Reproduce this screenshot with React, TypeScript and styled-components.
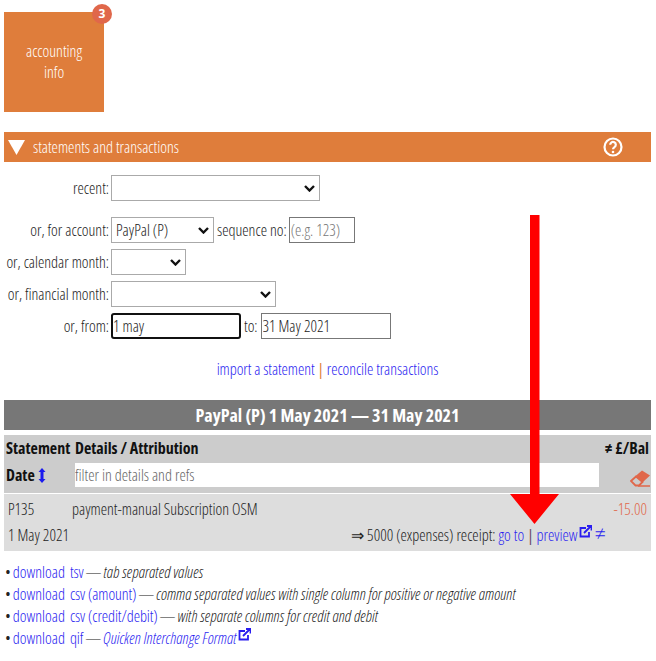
import React from "react";
import styled, { createGlobalStyle } from "styled-components";

const Global = createGlobalStyle`
  html, body { margin: 0; padding: 0; background: #fff; }
  body { font-family: "Open Sans", "Liberation Sans", sans-serif; font-stretch: 75%; font-weight: 300; font-size: 16px; color: #222; }
  * { box-sizing: border-box; }
  a { color: #2a1df0; text-decoration: none; }
`;

const Page = styled.div`
  position: relative;
  width: 656px;
  height: 661px;
  padding: 12px 5px 0 4px;
  overflow: hidden;
`;

const TileWrap = styled.div`
  position: relative;
  width: 100px;
  height: 100px;
`;

const Tile = styled.div`
  width: 100px;
  height: 100px;
  background: #df7d3b;
  color: #fff;
  display: flex;
  align-items: center;
  justify-content: center;
  text-align: center;
  line-height: 21px;
`;

const Badge = styled.span`
  position: absolute;
  top: -8px;
  right: -8px;
  width: 20px;
  height: 20px;
  border-radius: 50%;
  background: #e0674a;
  color: #fff;
  font-size: 12px;
  font-weight: 700;
  font-stretch: 100%;
  line-height: 20px;
  text-align: center;
`;

const SectionBar = styled.div`
  margin-top: 20px;
  height: 30px;
  background: #df7d3b;
  color: #fff;
  display: flex;
  align-items: center;
  padding: 0 28px 0 4px;
`;

const SectionTitle = styled.span`
  flex: 1;
  margin-left: 8px;
`;

const Form = styled.div`
  margin-top: 13px;
  display: flex;
  flex-direction: column;
  gap: 6px;
`;

const Row = styled.div<{ $gapAfter?: boolean }>`
  display: flex;
  align-items: center;
  height: 26px;
  margin-bottom: ${(p) => (p.$gapAfter ? "10px" : "0")};
`;

const Label = styled.label`
  width: 105px;
  margin-right: 2px;
  text-align: right;
  white-space: nowrap;
`;

const Select = styled.select<{ $w: number }>`
  width: ${(p) => p.$w}px;
  height: 26px;
  appearance: none;
  background: #fff;
  border: 1px solid #aaa;
  border-radius: 0;
  font: inherit;
  font-stretch: 75%;
  color: #222;
  padding: 0 4px;
`;

const SelectWrap = styled.span`
  position: relative;
  display: inline-flex;
`;

const Chevron = styled.svg`
  position: absolute;
  right: 5px;
  top: 10px;
  width: 11px;
  height: 7px;
  pointer-events: none;
`;

const Inline = styled.span<{ $right?: number }>`
  margin: 0 ${(p) => p.$right ?? 3}px 0 3px;
`;

const TextInput = styled.input<{ $w: number; $focus?: boolean }>`
  width: ${(p) => p.$w}px;
  height: 26px;
  border: ${(p) => (p.$focus ? "2px solid #111" : "1px solid #777")};
  border-radius: ${(p) => (p.$focus ? "3px" : "0")};
  font: inherit;
  font-stretch: 75%;
  color: #222;
  padding: 0 ${(p) => (p.$focus ? "0" : "1px")};
  background: #fff;
  outline: none;
  &::placeholder { color: #777; }
`;

const Links = styled.div`
  margin-top: 19px;
  text-align: center;
  line-height: 22px;
  letter-spacing: -0.06px;
`;

const Sep = styled.span<{ $dark?: boolean }>`
  color: ${(p) => (p.$dark ? "#6b4a6b" : "#df7d3b")};
  font-weight: 400;
`;

const TitleBand = styled.div`
  margin-top: 20px;
  height: 30px;
  background: #777;
  color: #fff;
  font-weight: 700;
  font-size: 18px;
  line-height: 30px;
  text-align: center;
`;

const HeadBlock = styled.div`
  margin-top: 5px;
  height: 58px;
  background: #ccc;
  font-weight: 700;
  color: #111;
`;

const HeadTop = styled.div`
  display: flex;
  height: 27px;
  align-items: center;
  padding: 0 2px 2px;
`;

const StatementHead = styled.span`
  width: 69px;
`;

const HeadBal = styled.span`
  margin-left: auto;
`;

const HeadBottom = styled.div`
  display: flex;
  align-items: center;
  height: 26px;
  padding-left: 2px;
`;

const DateHead = styled.span`
  width: 69px;
  display: flex;
  align-items: center;
  gap: 3px;
`;

const Filter = styled.input`
  width: 524px;
  height: 24px;
  border: 0;
  font: inherit;
  font-weight: 300;
  font-stretch: 75%;
  padding: 0;
  background: #fff;
  &::placeholder { color: #666; }
`;

const DataRow = styled.div`
  margin-top: 1px;
  height: 57px;
  background: #ddd;
  padding: 2px 4px 0 4px;
`;

const DataLine = styled.div`
  display: flex;
  height: 26px;
  align-items: center;
`;

const Ref = styled.span`
  width: 64px;
`;

const Amount = styled.span`
  margin-left: auto;
  color: #e0674a;
`;

const Account = styled.span`
  margin-left: auto;
  margin-right: 41px;
  white-space: pre;
`;

const NotEqual = styled.a`
  font-size: 20px;
  line-height: 16px;
  font-stretch: 100%;
`;

const Eraser = styled.svg`
  margin-left: auto;
  margin-right: 1px;
  margin-top: 6px;
  width: 20px;
  height: 17px;
  flex: none;
`;

const List = styled.ul`
  list-style: none;
  margin: 10px 0 0;
  padding: 0 0 0 1px;
  line-height: 22px;
  white-space: nowrap;
  word-spacing: -1px;
`;

const DownloadWord = styled.span`
  margin-right: 5px;
`;

const FileKind = styled.span`
  letter-spacing: -0.1px;
  word-spacing: 0;
`;

const Note = styled.em`
  font-style: italic;
  word-spacing: 0;
  letter-spacing: 0.03px;
`;

const Ext = styled.svg`
  width: 13px;
  height: 13px;
  vertical-align: 3px;
  margin-left: 1px;
`;

const Arrow = styled.svg`
  position: absolute;
  left: 510px;
  top: 215px;
  width: 49px;
  height: 309px;
`;

const Help = styled.svg`
  width: 20px;
  height: 20px;
`;

const ExtIcon = () => (
  <Ext viewBox="0 0 13 13" fill="none" stroke="#2a1df0" strokeWidth="1.8">
    <path d="M7 3H1.500v8.500H10V7" />
    <path d="M5 8l6.500-6.500M8 1h4.500v4.500" />
  </Ext>
);

const Sel = ({ w, value }: { w: number; value?: string }) => (
  <SelectWrap>
    <Select $w={w} defaultValue={value ?? ""}>
      <option value={value ?? ""}>{value ?? ""}</option>
    </Select>
    <Chevron viewBox="0 0 11 7" fill="none" stroke="#111" strokeWidth="2.4">
      <path d="M1 1l4.500 4.500L10 1" />
    </Chevron>
  </SelectWrap>
);

const Download = ({ kind }: { kind: string }) => (
  <a href="#"><DownloadWord>download</DownloadWord><FileKind>{kind}</FileKind></a>
);

export default function App() {
  return (
    <Page>
      <Global />
      <TileWrap>
        <Tile>accounting<br />info</Tile>
        <Badge>3</Badge>
      </TileWrap>
      <SectionBar>
        <svg width="17" height="15" viewBox="0 0 17 15"><path d="M0 0h17L8.500 15z" fill="#fff" /></svg>
        <SectionTitle>statements and transactions</SectionTitle>
        <Help viewBox="0 0 20 20" fill="none">
          <circle cx="10" cy="10" r="8.500" stroke="#fff" strokeWidth="2.200" />
          <path d="M7.200 7.800a2.800 2.800 0 1 1 4.300 2.300c-1 .7-1.500 1.100-1.500 2.100" stroke="#fff" strokeWidth="2.200" />
          <circle cx="10" cy="15" r="1.300" fill="#fff" />
        </Help>
      </SectionBar>
      <Form>
        <Row $gapAfter><Label>recent:</Label><Sel w={209} /></Row>
        <Row>
          <Label>or, for account:</Label><Sel w={103} value="PayPal (P)" />
          <Inline $right={2}>sequence no:</Inline><TextInput $w={66} placeholder="(e.g. 123)" />
        </Row>
        <Row><Label>or, calendar month:</Label><Sel w={75} /></Row>
        <Row><Label>or, financial month:</Label><Sel w={165} /></Row>
        <Row>
          <Label>or, from:</Label><TextInput $w={130} $focus defaultValue="1 may" />
          <Inline>to:</Inline><TextInput $w={130} defaultValue="31 May 2021" />
        </Row>
      </Form>
      <Links><a href="#">import a statement</a> <Sep>|</Sep> <a href="#">reconcile transactions</a></Links>
      <TitleBand>PayPal (P) 1 May 2021 — 31 May 2021</TitleBand>
      <HeadBlock>
        <HeadTop><StatementHead>Statement</StatementHead><span>Details / Attribution</span><HeadBal>≠ £/Bal</HeadBal></HeadTop>
        <HeadBottom>
          <DateHead>Date
            <svg width="8" height="15" viewBox="0 0 8 15" fill="#1a1aee"><path d="M4 0l3.500 4H5.500v7h2L4 15 .5 11h2V4h-2z" /></svg>
          </DateHead>
          <Filter placeholder="filter in details and refs" />
          <Eraser viewBox="0 0 20 17" fill="none">
            <path d="M1 11l5-4.500 6.500 5.500-3.500 3.500H5.500z" stroke="#e0674a" strokeWidth="1.800" />
            <path d="M5 6.500L12 .5l8 5-7 6.500z" fill="#e0674a" />
            <path d="M8 16h12" stroke="#e0674a" strokeWidth="1.500" />
          </Eraser>
        </HeadBottom>
      </HeadBlock>
      <DataRow>
        <DataLine><Ref>P135</Ref><span>payment-manual Subscription OSM</span><Amount>-15.00</Amount></DataLine>
        <DataLine>
          <span>1 May 2021</span>
          <Account>⇒ 5000 (expenses) receipt: <a href="#">go to</a> <Sep $dark>|</Sep> <a href="#">preview<ExtIcon /></a> <NotEqual href="#">≠</NotEqual></Account>
        </DataLine>
      </DataRow>
      <List>
        <li>• <Download kind="tsv" /> — <Note>tab separated values</Note></li>
        <li>• <Download kind="csv (amount)" /> — <Note>comma separated values with single column for positive or negative amount</Note></li>
        <li>• <Download kind="csv (credit/debit)" /> — <Note>with separate columns for credit and debit</Note></li>
        <li>• <Download kind="qif" /> — <a href="#"><Note>Quicken Interchange Format</Note><ExtIcon /></a></li>
      </List>
      <Arrow viewBox="0 0 49 309"><path d="M20 0h9.500v279H49L24.500 309 0 279h20z" fill="#f00" /></Arrow>
    </Page>
  );
}
